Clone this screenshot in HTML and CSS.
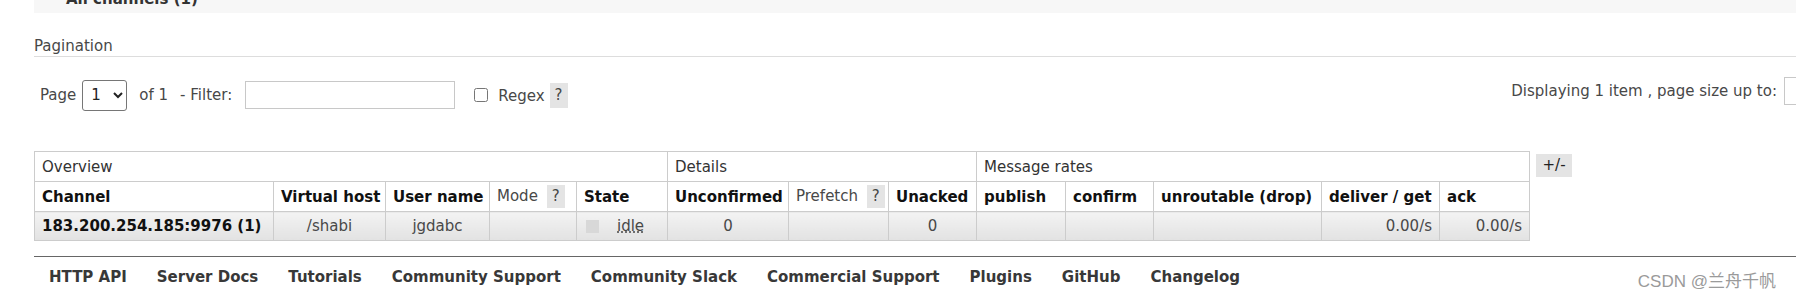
FILE: index.html
```html
<!DOCTYPE html>
<html lang="en">
<head>
  <meta charset="UTF-8">
  <meta name="viewport" content="width=device-width, initial-scale=1.0">
  <title>RabbitMQ Management - Channels</title>
  <link rel="stylesheet" href="styles.css">
</head>

<body>
  <div class="main">
    <div class="section-head">
      <h2><span class="arrow">&#9660;</span>All channels (1)</h2>
    </div>

    <h3 class="pagination-title">Pagination</h3>
    <div class="filter-row">
      <div class="filter-left">
        <span>Page</span>
        <select class="page-select">
          <option>1</option>
        </select>
        <span>of 1</span>
        <span class="filter-label">- Filter:</span>
        <input class="filter-input" type="text">
        <label class="regex"><input type="checkbox"> Regex</label>
        <span class="help">?</span>
      </div>
      <div class="filter-right">
        <span>Displaying 1 item , page size up to:</span>
        <input class="size-input" type="text">
      </div>
    </div>

    <div class="table-wrap">
      <table class="list">
        <colgroup>
          <col style="width: 239px">
          <col style="width: 112px">
          <col style="width: 104px">
          <col style="width: 87px">
          <col style="width: 91px">
          <col style="width: 121px">
          <col style="width: 100px">
          <col style="width: 88px">
          <col style="width: 89px">
          <col style="width: 88px">
          <col style="width: 168px">
          <col style="width: 118px">
          <col style="width: 90px">
        </colgroup>
        <thead>
          <tr class="group">
            <th colspan="5">Overview</th>
            <th colspan="3">Details</th>
            <th colspan="5">Message rates</th>
          </tr>
          <tr>
            <th>Channel</th>
            <th>Virtual host</th>
            <th>User name</th>
            <th class="light">Mode <span class="help">?</span></th>
            <th>State</th>
            <th>Unconfirmed</th>
            <th class="light">Prefetch <span class="help">?</span></th>
            <th>Unacked</th>
            <th>publish</th>
            <th>confirm</th>
            <th>unroutable (drop)</th>
            <th>deliver / get</th>
            <th>ack</th>
          </tr>
        </thead>
        <tbody>
          <tr>
            <td class="name">183.200.254.185:9976 (1)</td>
            <td class="c">/shabi</td>
            <td class="c">jgdabc</td>
            <td></td>
            <td class="state"><span class="status-grey"></span><abbr title="idle">idle</abbr></td>
            <td class="c">0</td>
            <td></td>
            <td class="c">0</td>
            <td></td>
            <td></td>
            <td></td>
            <td class="r">0.00/s</td>
            <td class="r">0.00/s</td>
          </tr>
        </tbody>
      </table>
      <span class="plus-minus">+/-</span>
    </div>
  </div>

  <div class="footer">
    <a href="#">HTTP API</a>
    <a href="#">Server Docs</a>
    <a href="#">Tutorials</a>
    <a href="#">Community Support</a>
    <a href="#">Community Slack</a>
    <a href="#">Commercial Support</a>
    <a href="#">Plugins</a>
    <a href="#">GitHub</a>
    <a href="#">Changelog</a>
  </div>

  <div class="watermark">CSDN @兰舟千帆</div>
</body>

</html>
```

FILE: styles.css
```css
body {
  margin: 0;
  font-family: 'DejaVu Sans', Verdana, sans-serif;
  font-size: 15px;
  color: #484848;
  background-color: #fff;
  overflow: hidden;
  position: relative;
  min-height: 301px;
}

.main {
  padding-left: 34px;
}

/* collapsed section header, scrolled mostly out of view */
.section-head {
  height: 13px;
  overflow: hidden;
  background-color: #f7f7f7;
}

.section-head h2 {
  margin: -11px 0 0 14px;
  font-size: 15px;
  line-height: 20px;
  font-weight: bold;
  color: #333;
}

.arrow {
  display: inline-block;
  width: 18px;
  font-size: 8px;
  color: #bbb;
  vertical-align: top;
  line-height: 14px;
}

.pagination-title {
  margin: 24px 0 0;
  font-size: 15px;
  font-weight: normal;
  line-height: 18px;
  padding-bottom: 1px;
  border-bottom: 1px solid #ddd;
  color: #484848;
}

.filter-row {
  display: flex;
  justify-content: space-between;
  align-items: flex-start;
  margin-top: 22px;
}

.filter-left {
  display: flex;
  align-items: center;
  height: 32px;
  padding-left: 6px;
}

.page-select {
  width: 45px;
  height: 31px;
  margin: 0 12px 0 6px;
  padding: 0 4px;
  font-family: 'DejaVu Sans', Verdana, sans-serif;
  font-size: 15px;
  color: #222;
  background-color: #fff;
  border: 1px solid #767676;
  border-radius: 3px;
}

.filter-label {
  margin-left: 12px;
}

.filter-input {
  width: 210px;
  height: 28px;
  margin-left: 13px;
  box-sizing: border-box;
  border: 1px solid #c8c8c8;
  font-size: 15px;
}

.regex {
  display: flex;
  align-items: center;
  margin-left: 19px;
  margin-top: 2px;
}

.regex input {
  width: 14px;
  height: 14px;
  margin: 0 10px 2px 0;
}

.help {
  display: inline-block;
  width: 18px;
  height: 25px;
  line-height: 25px;
  text-align: center;
  background-color: #e4e4e4;
  color: #444;
  font-weight: normal;
}

.filter-left .help {
  margin-left: 5px;
  margin-top: 1px;
}

.filter-right {
  display: flex;
  align-items: center;
  margin-top: -2px;
  margin-right: -43px;
}

.size-input {
  width: 55px;
  height: 28px;
  margin-left: 7px;
  box-sizing: border-box;
  border: 1px solid #c8c8c8;
}

.table-wrap {
  display: flex;
  align-items: flex-start;
  gap: 6px;
  margin-top: 40px;
}

table.list {
  border-collapse: collapse;
  table-layout: fixed;
  width: 1495px;
}

table.list th,
table.list td {
  border: 1px solid #ccc;
  height: 29px;
  padding: 0 7px;
  white-space: nowrap;
  overflow: hidden;
}

table.list th {
  text-align: left;
  font-weight: bold;
  color: #111;
  background-color: #fff;
}

table.list tr.group th {
  font-weight: normal;
  color: #333;
}

table.list th.light {
  font-weight: normal;
  color: #484848;
}

table.list th .help {
  height: 23px;
  line-height: 23px;
  margin-left: 4px;
}

table.list td {
  height: 28px;
  background: linear-gradient(#f3f3f3, #e2e2e2);
}

table.list td.name {
  font-weight: bold;
  color: #111;
}

table.list td.c {
  text-align: center;
}

table.list td.r {
  text-align: right;
}

table.list td.state {
  padding-left: 9px;
}

.status-grey {
  display: inline-block;
  width: 13px;
  height: 13px;
  margin-right: 18px;
  background-color: #d8d8d8;
  vertical-align: -2px;
}

abbr {
  text-decoration: underline dotted;
}

.plus-minus {
  display: inline-block;
  width: 36px;
  height: 23px;
  line-height: 23px;
  margin-top: 3px;
  text-align: center;
  background-color: #e4e4e4;
  color: #222;
}

.footer {
  margin: 15px 0 0 34px;
  border-top: 1px solid #666;
  padding: 11px 0 0 15px;
  display: flex;
  gap: 30px;
}

.footer a {
  color: #383838;
  font-weight: bold;
  text-decoration: none;
  line-height: 18px;
}

.watermark {
  position: absolute;
  right: 20px;
  top: 273px;
  font-family: 'Liberation Sans', 'Noto Sans CJK SC', sans-serif;
  font-size: 17px;
  line-height: 18px;
  color: #9a9a9a;
}
```
